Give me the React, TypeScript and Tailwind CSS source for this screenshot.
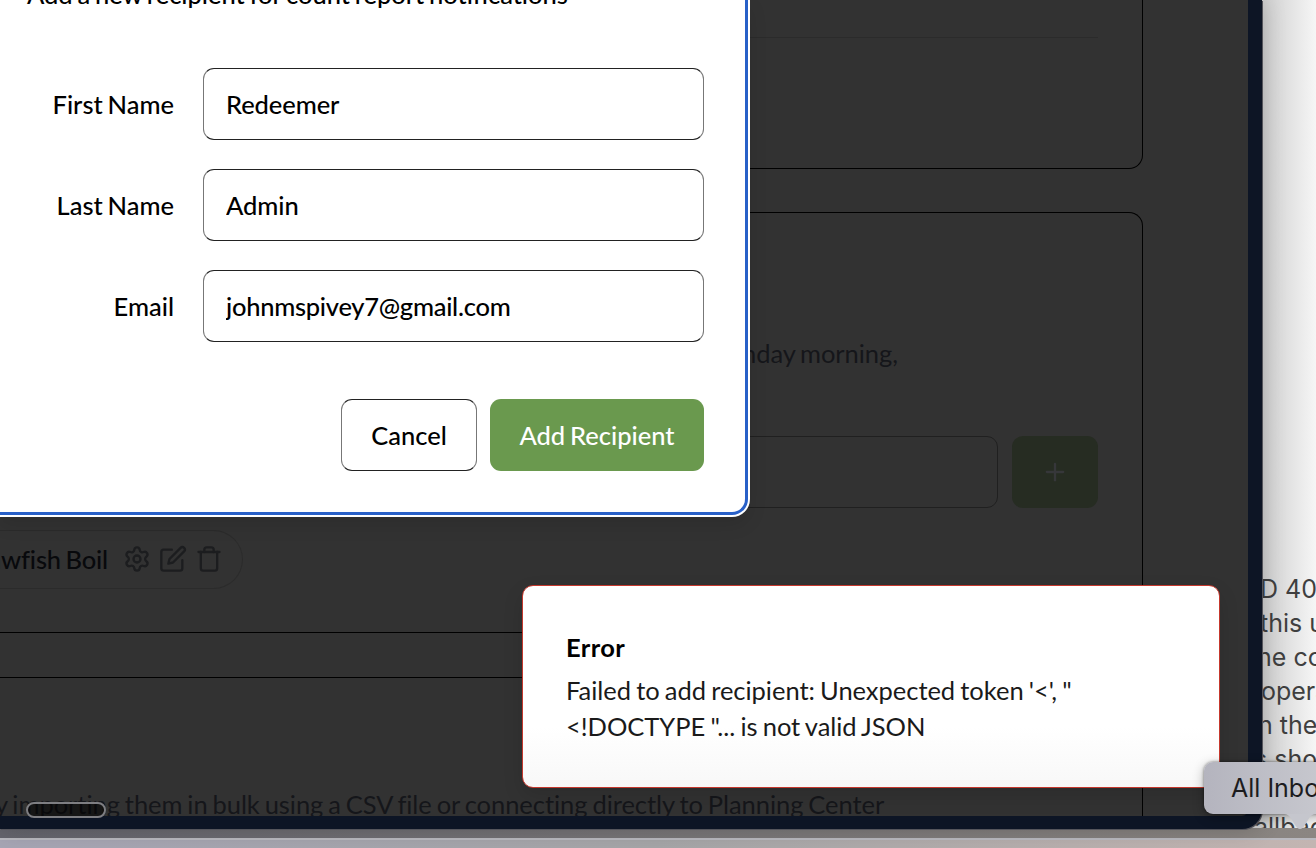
import type { ReactNode } from "react";
import { FiEdit } from "react-icons/fi";
import { Plus, Settings, Trash } from "lucide-react";

function Field({ label, value, tight = false }: { label: string; value: string; tight?: boolean }) {
  return (
    <label className="flex h-[72px] items-center">
      <span className="w-[174px] text-right font-medium">{label}</span>
      <input
        className={`ml-[29px] h-[72px] w-[501px] rounded-[11px] border border-x-[#777] border-y-[#222] pl-[22px] font-medium text-black outline-none ${tight ? "tracking-[-0.27px]" : "tracking-[-0.08px]"}`}
        defaultValue={value}
      />
    </label>
  );
}

function MailLine({ children, className }: { children?: ReactNode; className: string }) {
  return <p className={`h-[34px] whitespace-nowrap ${className}`}>{children}</p>;
}

function MailWindow() {
  return (
    <div className="absolute top-0 left-[1240px] h-[828px] w-[76px] overflow-hidden bg-linear-to-r from-[#cfcfcf] from-30% to-[#f6f6f6] pt-[572px] font-['Inter',sans-serif] text-[25px] leading-[34px] text-[#3f3f3f]">
      <MailLine className="pl-[20px] [word-spacing:0px]">D 403</MailLine>
      <MailLine className="pl-[20px] [word-spacing:0px]">this url</MailLine>
      <MailLine className="pl-[17px] [word-spacing:0px]">he cor</MailLine>
      <MailLine className="pl-[21px]">opera</MailLine>
      <MailLine className="pl-[18px] [word-spacing:0px]">n the</MailLine>
      <MailLine className="pl-[14px] [word-spacing:0px]">s shou</MailLine>
      <MailLine className="pl-[14px]" />
      <MailLine className="pl-[14px]">allbac</MailLine>
    </div>
  );
}

function Browser() {
  return (
    <div className="absolute top-0 left-0 h-[829px] w-[1262px] overflow-hidden rounded-br-[20px] border-r-[14px] border-b-[13px] border-[#0d1525] bg-[#323232] text-[#15161a] shadow-[1px_1px_0_#55555c,0_0_24px_rgba(0,0,0,0.2)]">
      <div className="flex w-[1143px] flex-col">
        <section className="h-[169px] rounded-br-[14px] border-r border-b border-black pt-[37px] pr-[44px]">
          <hr className="border-[#2b2b2b]" />
        </section>
        <section className="mt-[43px] h-[421px] rounded-tr-[14px] border-t border-r border-b border-black pr-[44px]">
          <p className="mt-[122px] h-[36px] pl-[742px] tracking-[-0.06px] whitespace-nowrap">nday morning,</p>
          <div className="mt-[65px] flex gap-[14px]">
            <div className="h-[72px] flex-1 rounded-[11px] border border-[#202020]" />
            <button className="flex h-[72px] w-[86px] items-center justify-center rounded-[11px] bg-[#262c22] pb-px text-[#36373a]">
              <Plus size={28} />
            </button>
          </div>
          <div className="mt-[22px] flex h-[59px] w-[243px] items-center justify-end gap-[8px] rounded-r-full border border-l-0 border-[#2b2b2b] pr-[19px] pb-px text-[#1c1d1f]">
            <span className="mr-[7px] pb-px font-medium tracking-[-0.18px] whitespace-nowrap text-[#08090c]">Crawfish Boil</span>
            <Settings size={28} className="shrink-0" />
            <FiEdit size={28} className="shrink-0" />
            <Trash size={28} className="shrink-0" />
          </div>
        </section>
        <section className="mt-[44px] h-[171px] border-t border-r border-black pt-[108px]">
          <p className="-ml-[5px] tracking-[-0.04px] whitespace-nowrap">y importing them in bulk using a CSV file or connecting directly to Planning Center</p>
        </section>
      </div>
    </div>
  );
}

function RecipientDialog() {
  return (
    <div className="absolute top-0 left-0 h-[517px] w-[750px] rounded-br-[18px] bg-white pr-[2px] pb-[2px] text-black shadow-[0_8px_18px_rgba(0,0,0,0.1)]">
      <div className="flex h-full flex-col overflow-hidden rounded-br-[16px] border-r-[3px] border-b-[3px] border-[#2860c8]">
        <p className="-mt-[24px] h-[36px] pl-[27px] font-medium tracking-[-0.04px] whitespace-nowrap">Add a new recipient for count report notifications</p>
        <div className="mt-[56px] flex flex-col gap-[29px]">
          <Field label="First Name" value="Redeemer" />
          <Field label="Last Name" value="Admin" />
          <Field label="Email" value="johnmspivey7@gmail.com" tight />
        </div>
        <div className="mt-[57px] flex w-[704px] justify-end gap-[13px] font-medium">
          <button className="h-[72px] w-[136px] rounded-[11px] border border-x-[#777] border-y-[#222]">Cancel</button>
          <button className="h-[72px] w-[214px] rounded-[11px] bg-[#6a994e] text-white [word-spacing:-1.6px]">Add Recipient</button>
        </div>
      </div>
    </div>
  );
}

function Toast() {
  return (
    <div className="absolute top-[585px] left-[522px] h-[203px] w-[698px] rounded-[11px] border border-[#c5382d] bg-linear-to-b from-white from-70% to-[#f8f8f8] pt-[43px] pl-[43px] shadow-[0_8px_20px_rgba(0,0,0,0.12)]">
      <h2 className="h-[43px] font-bold tracking-[0.4px] text-black">Error</h2>
      <p className="tracking-[-0.03px] text-[#1a1a1a] [word-spacing:-1.3px]">
        Failed to add recipient: Unexpected token '&lt;', "<br />
        &lt;!DOCTYPE "... is not valid JSON
      </p>
    </div>
  );
}

export default function App() {
  return (
    <div className="relative h-[848px] w-[1316px] overflow-hidden bg-linear-to-r from-[#65656d] to-[#8b8682] font-['Lato',sans-serif] text-[25.5px] leading-[36px] [word-spacing:-1.6px]">
      <div className="absolute top-[838px] left-0 h-[10px] w-full border-t-2 border-[#b9b9bf] bg-linear-to-r from-[#a6a5b4] via-[#a5a5a7] to-[#c3b5b2]" />
      <MailWindow />
      <Browser />
      <RecipientDialog />
      <Toast />
      <div className="absolute top-[802px] left-[26px] h-[16px] w-[80px] rounded-full border-2 border-[#7e7e82] bg-black/55" />
      <div className="absolute top-[762px] left-[1204px] h-[52px] w-[130px] rounded-[9px] bg-linear-to-r from-[#b4b4be] to-[#c9cad0] pl-[27px] font-['Inter',sans-serif] text-[25px] leading-[53px] whitespace-nowrap text-[#1c1c1e] shadow-[0_0_3px_rgba(0,0,0,0.5),0_3px_12px_rgba(0,0,0,0.3)] [word-spacing:0px]">
        All Inboxes
        <svg className="absolute top-[52px] left-[80px]" width="32" height="16" viewBox="0 0 32 16" fill="#c5c6cd">
          <path d="M0 0C6 0 7 5 11 11Q16 19 21 11C25 5 26 0 32 0Z" />
        </svg>
      </div>
    </div>
  );
}
